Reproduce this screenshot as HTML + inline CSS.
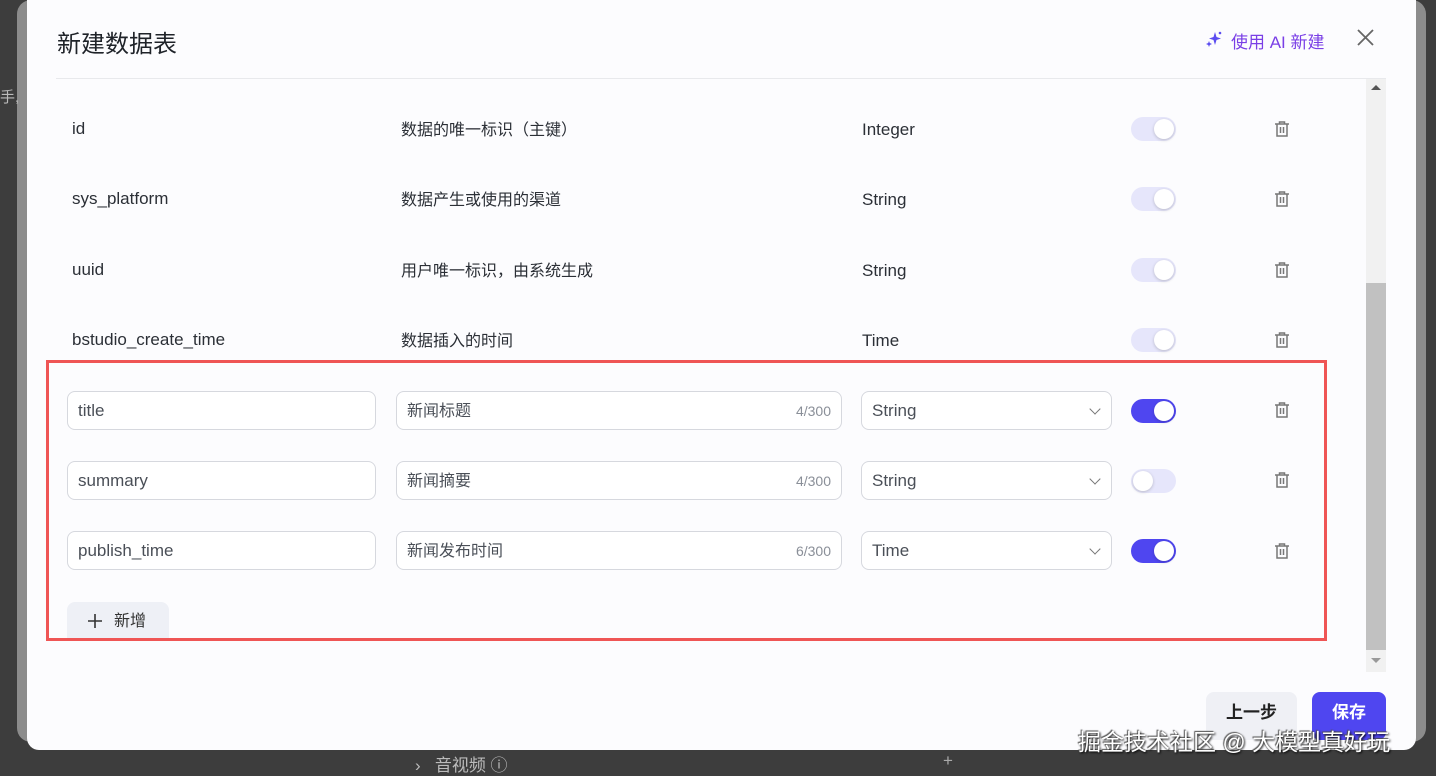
<!DOCTYPE html>
<html><head><meta charset="utf-8"><style>
*{box-sizing:border-box;margin:0;padding:0}
body{width:1436px;height:775px;background:#3d3d3d;font-family:"Liberation Sans","Noto Sans CJK SC",sans-serif;position:relative;overflow:hidden;color:#1f2329}
.abs{position:absolute}
.back{left:17px;top:0;width:1409px;height:742px;background:#8c8c8c;border-radius:14px}
.modal{left:27px;top:0;width:1389px;height:750px;background:#fcfcfe;border-radius:0 0 12px 12px}
.t{position:absolute;font-size:17px;color:#2b2f36;height:24px;line-height:24px;display:flex;align-items:center}
.inp{position:absolute;height:39px;border:1px solid #d6d8de;border-radius:8px;background:#fff;font-size:17px;color:#4a4f57;padding:0 10px;display:flex;align-items:center}
.cj{position:relative;top:-2px}
.cnt{position:absolute;right:10px;top:0;height:37px;display:flex;align-items:center;font-size:14px;color:#8a8f98}
.tg{position:absolute;width:45px;height:24px;border-radius:12px;background:#e6e6fb}
.tg i{position:absolute;top:2px;width:20px;height:20px;border-radius:50%;background:#fff;box-shadow:0 1px 3px rgba(0,0,0,.2)}
.on{background:#4f46f0}
.tr{position:absolute;width:18px;height:18px}
.chev{position:absolute;right:12px;top:13px;width:8px;height:8px;border-right:1.5px solid #777;border-bottom:1.5px solid #777;transform:rotate(45deg)}
</style></head><body>
<div class="abs back"></div>
<div class="abs" style="left:0;top:86px;font-size:15px;color:#bbb">手,</div>
<div class="abs modal"></div>
<div class="abs" style="left:57px;top:24px;font-size:24px;color:#1f2329">新建数据表</div>
<svg class="abs" style="left:1205px;top:30px" width="18" height="18" viewBox="0 0 18 18"><path d="M10 2 L11.5 7 L16 8.5 L11.5 10 L10 15 L8.5 10 L4 8.5 L8.5 7Z" fill="#5b4cf0"/><path d="M4 11 L4.8 13 L7 14 L4.8 15 L4 17 L3.2 15 L1 14 L3.2 13Z" fill="#5b4cf0"/><circle cx="15" cy="3" r="1.3" fill="#5b4cf0"/></svg>
<div class="abs" style="left:1231px;top:28px;font-size:17px;color:#7a3fe6">使用 AI 新建</div>
<svg class="abs" style="left:1357px;top:29px" width="17" height="17"><path d="M1 1L16 16M16 1L1 16" stroke="#666" stroke-width="1.8"/></svg>
<div class="abs" style="left:56px;top:78px;width:1330px;height:1px;background:#e8e9ec"></div>
<div class="abs" style="left:1366px;top:79px;width:20px;height:593px;background:#f1f1f1"></div>
<div class="abs" style="left:1366px;top:283px;width:20px;height:367px;background:#c1c1c1"></div>
<div class="abs" style="left:1371px;top:85px;border:5px solid transparent;border-bottom:5px solid #555;border-top:0"></div>
<div class="abs" style="left:1371px;top:658px;border:5px solid transparent;border-top:5px solid #999;border-bottom:0"></div>

<div class="t" style="left:72px;top:117px">id</div><div class="t" style="left:401px;top:119px;font-size:16px">数据的唯一标识（主键）</div><div class="t" style="left:862px;top:118px">Integer</div>
<div class="t" style="left:72px;top:187px">sys_platform</div><div class="t" style="left:401px;top:189px;font-size:16px">数据产生或使用的渠道</div><div class="t" style="left:862px;top:188px">String</div>
<div class="t" style="left:72px;top:258px">uuid</div><div class="t" style="left:401px;top:260px;font-size:16px">用户唯一标识，由系统生成</div><div class="t" style="left:862px;top:259px">String</div>
<div class="t" style="left:72px;top:328px">bstudio_create_time</div><div class="t" style="left:401px;top:330px;font-size:16px">数据插入的时间</div><div class="t" style="left:862px;top:329px">Time</div>
<div class="tg" style="left:1131px;top:117px"><i style="left:23px"></i></div>
<div class="tg" style="left:1131px;top:187px"><i style="left:23px"></i></div>
<div class="tg" style="left:1131px;top:258px"><i style="left:23px"></i></div>
<div class="tg" style="left:1131px;top:328px"><i style="left:23px"></i></div>

<div class="inp" style="left:67px;top:391px;width:309px">title</div>
<div class="inp" style="left:396px;top:391px;width:446px;font-size:16px"><span class="cj">新闻标题</span><span class="cnt">4/300</span></div>
<div class="inp" style="left:861px;top:391px;width:251px">String<span class="chev"></span></div>
<div class="tg on" style="left:1131px;top:399px"><i style="left:23px"></i></div>
<div class="inp" style="left:67px;top:461px;width:309px">summary</div>
<div class="inp" style="left:396px;top:461px;width:446px;font-size:16px"><span class="cj">新闻摘要</span><span class="cnt">4/300</span></div>
<div class="inp" style="left:861px;top:461px;width:251px">String<span class="chev"></span></div>
<div class="tg" style="left:1131px;top:469px"><i style="left:2px"></i></div>
<div class="inp" style="left:67px;top:531px;width:309px">publish_time</div>
<div class="inp" style="left:396px;top:531px;width:446px;font-size:16px"><span class="cj">新闻发布时间</span><span class="cnt">6/300</span></div>
<div class="inp" style="left:861px;top:531px;width:251px">Time<span class="chev"></span></div>
<div class="tg on" style="left:1131px;top:539px"><i style="left:23px"></i></div>

<div class="abs" style="left:67px;top:602px;width:102px;height:38px;background:#eef0f6;border-radius:8px 8px 0 0"></div>
<svg class="abs" style="left:88px;top:614px" width="14" height="14"><path d="M7 0V14M0 7H14" stroke="#333" stroke-width="1.6"/></svg>
<div class="abs" style="left:114px;top:610px;font-size:16px;color:#333;line-height:24px">新增</div>

<svg width="0" height="0" style="position:absolute"><defs><g id="tr"><path d="M2 4H16M6.5 4V2H11.5V4M4 4V16H14V4M7.5 7V13M10.5 7V13" fill="none" stroke="#777" stroke-width="1.5"/></g></defs></svg>
<svg class="tr" style="left:1273px;top:120px"><use href="#tr"/></svg>
<svg class="tr" style="left:1273px;top:190px"><use href="#tr"/></svg>
<svg class="tr" style="left:1273px;top:261px"><use href="#tr"/></svg>
<svg class="tr" style="left:1273px;top:331px"><use href="#tr"/></svg>
<svg class="tr" style="left:1273px;top:401px"><use href="#tr"/></svg>
<svg class="tr" style="left:1273px;top:471px"><use href="#tr"/></svg>
<svg class="tr" style="left:1273px;top:542px"><use href="#tr"/></svg>

<div class="abs" style="left:46px;top:360px;width:1281px;height:281px;border:3px solid #ef5555"></div>

<div class="abs" style="left:1206px;top:692px;width:91px;height:48px;background:#eff0f5;border-radius:8px;font-size:17px;color:#222;text-align:center;line-height:42px;font-weight:bold">上一步</div>
<div class="abs" style="left:1312px;top:692px;width:74px;height:48px;background:#4f46f0;border-radius:8px;font-size:17px;color:#fff;text-align:center;line-height:42px;font-weight:bold">保存</div>
<div class="abs" style="left:1078px;top:723px;font-size:23px;color:#fff;text-shadow:1px 1px 2px #000,-1px -1px 1px #555">掘金技术社区 @ 大模型真好玩</div>
<div class="abs" style="left:415px;top:751px;font-size:17px;color:#bbb">›&nbsp;&nbsp;&nbsp;音视频 ⓘ</div>
<div class="abs" style="left:943px;top:751px;font-size:17px;color:#aaa">+</div>
</body></html>
